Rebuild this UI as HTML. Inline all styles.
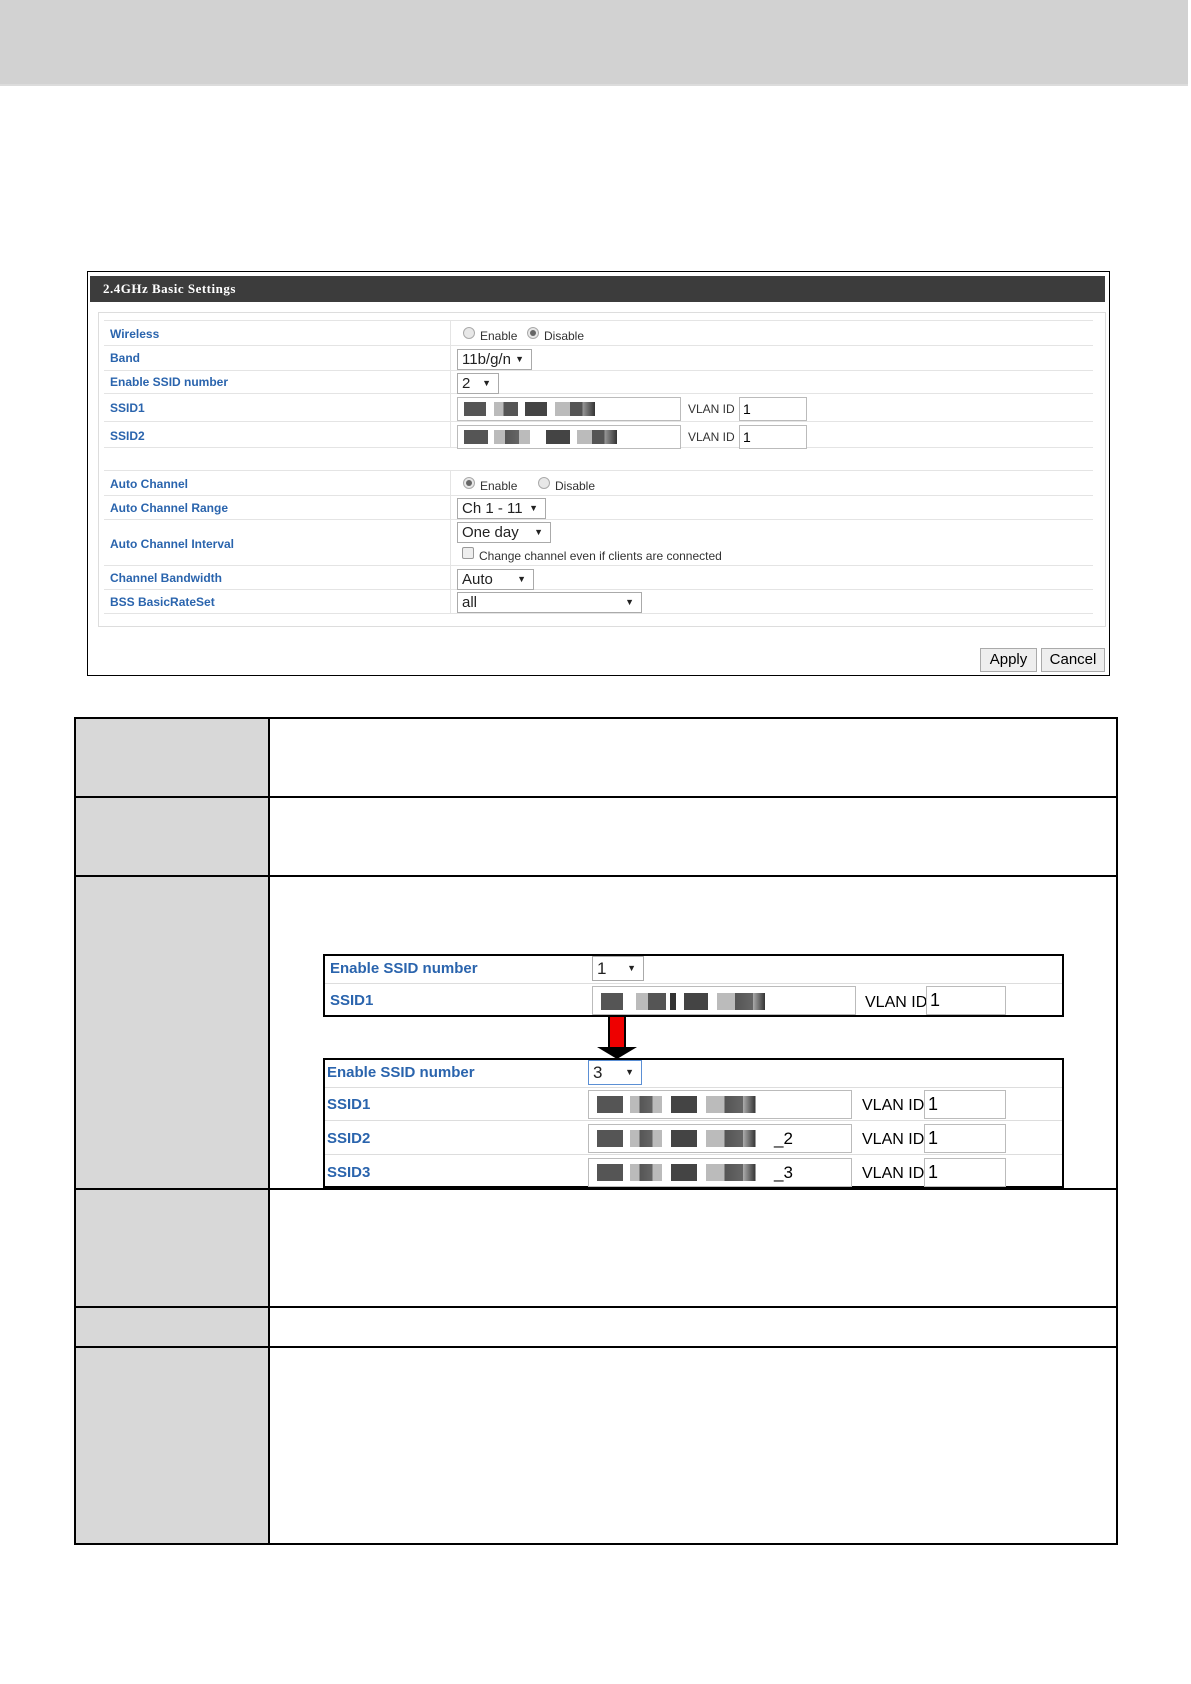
<!DOCTYPE html>
<html><head><meta charset="utf-8"><style>
*{margin:0;padding:0;box-sizing:border-box}
body{width:1191px;height:1684px;position:relative;background:#fff;font-family:"Liberation Sans",Arial,sans-serif;overflow:hidden}
.a{position:absolute}
.lbl{position:absolute;color:#2a64ad;font-weight:bold;font-size:12px}
.row{position:absolute;left:104px;width:989px;border-bottom:1px solid #e4e4e4;border-top:1px solid #e4e4e4}
.sel{position:absolute;border:1px solid #aaa;background:#fff;font-size:15px;color:#222;padding-left:4px;line-height:19px;height:21px}
.sel::after{content:"▼";position:absolute;right:7px;top:0;font-size:9px}
.inp{position:absolute;border:1px solid #bbb;background:#fff;font-size:14px;line-height:22px;padding-left:3px;height:24px}
.t{position:absolute;font-size:12px;color:#333}
.rad{position:absolute;width:12px;height:12px;border-radius:50%;border:1px solid #aaa;background:#e8e8e8}
.rad.on::after{content:"";position:absolute;left:2px;top:2px;width:6px;height:6px;border-radius:50%;background:#666}
.px{position:absolute;height:14px}
.btn{position:absolute;border:1px solid #aaa;background:#eee;font-size:15px;text-align:center;line-height:22px;height:24px}
.cell{position:absolute;background:#d8d8d8}
.hl{position:absolute;background:#000;height:2px}
.vl{position:absolute;background:#000;width:2px}
.bl{position:absolute;color:#2a64ad;font-weight:bold;font-size:15px}
</style></head><body>
<div class="a" style="left:0;top:0;width:1188px;height:86px;background:#d2d2d2;border-bottom:2px solid #dcdcdc"></div>

<!-- settings frame -->
<div class="a" style="left:87px;top:271px;width:1023px;height:405px;border:1px solid #000"></div>
<div class="a" style="left:90px;top:276px;width:1015px;height:26px;background:#3c3c3c"></div>
<div class="a" style="left:103px;top:281px;color:#fff;font-family:'Liberation Serif',serif;font-weight:bold;font-size:13px;letter-spacing:.5px">2.4GHz Basic Settings</div>
<div class="a" style="left:98px;top:312px;width:1008px;height:315px;border:1px solid #ddd"></div>
<div class="a" style="left:450px;top:320px;width:1px;height:128px;background:#e4e4e4"></div>
<div class="a" style="left:450px;top:470px;width:1px;height:144px;background:#e4e4e4"></div>

<div class="row" style="top:320px;height:26px"></div>
<div class="row" style="top:370px;height:24px"></div>
<div class="row" style="top:421px;height:27px"></div>
<div class="row" style="top:470px;height:26px"></div>
<div class="row" style="top:519px;height:47px"></div>
<div class="row" style="top:589px;height:25px"></div>

<div class="lbl" style="left:110px;top:327px">Wireless</div>
<div class="lbl" style="left:110px;top:351px">Band</div>
<div class="lbl" style="left:110px;top:375px">Enable SSID number</div>
<div class="lbl" style="left:110px;top:401px">SSID1</div>
<div class="lbl" style="left:110px;top:429px">SSID2</div>
<div class="lbl" style="left:110px;top:477px">Auto Channel</div>
<div class="lbl" style="left:110px;top:501px">Auto Channel Range</div>
<div class="lbl" style="left:110px;top:537px">Auto Channel Interval</div>
<div class="lbl" style="left:110px;top:571px">Channel Bandwidth</div>
<div class="lbl" style="left:110px;top:595px">BSS BasicRateSet</div>

<div class="rad" style="left:463px;top:327px"></div><div class="t" style="left:480px;top:329px">Enable</div>
<div class="rad on" style="left:527px;top:327px"></div><div class="t" style="left:544px;top:329px">Disable</div>
<div class="sel" style="left:457px;top:349px;width:75px">11b/g/n</div>
<div class="sel" style="left:457px;top:373px;width:42px">2</div>
<div class="inp" style="left:457px;top:397px;width:224px"></div>
<div class="px" style="left:464px;top:402px;width:22px;background:#555"></div><div class="px" style="left:494px;top:402px;width:24px;background:linear-gradient(90deg,#bbb 40%,#555 40%)"></div><div class="px" style="left:525px;top:402px;width:22px;background:#444"></div><div class="px" style="left:555px;top:402px;width:50px;background:linear-gradient(90deg,#bbb 30%,#555 30%,#555 55%,#999 55%,#333 80%,#fff 80%)"></div>
<div class="t" style="left:688px;top:402px">VLAN ID</div>
<div class="inp" style="left:739px;top:397px;width:68px">1</div>
<div class="inp" style="left:457px;top:425px;width:224px"></div>
<div class="px" style="left:464px;top:430px;width:24px;background:#555"></div><div class="px" style="left:494px;top:430px;width:36px;background:linear-gradient(90deg,#bbb 30%,#555 30%,#666 70%,#bbb 70%)"></div><div class="px" style="left:546px;top:430px;width:24px;background:#444"></div><div class="px" style="left:577px;top:430px;width:50px;background:linear-gradient(90deg,#bbb 30%,#555 30%,#555 55%,#999 55%,#333 80%,#fff 80%)"></div>
<div class="t" style="left:688px;top:430px">VLAN ID</div>
<div class="inp" style="left:739px;top:425px;width:68px">1</div>

<div class="rad on" style="left:463px;top:477px"></div><div class="t" style="left:480px;top:479px">Enable</div>
<div class="rad" style="left:538px;top:477px"></div><div class="t" style="left:555px;top:479px">Disable</div>
<div class="sel" style="left:457px;top:498px;width:89px">Ch 1 - 11</div>
<div class="sel" style="left:457px;top:522px;width:94px">One day</div>
<div class="a" style="left:462px;top:547px;width:12px;height:12px;border:1px solid #999;border-radius:2px;background:#eee"></div>
<div class="t" style="left:479px;top:549px">Change channel even if clients are connected</div>
<div class="sel" style="left:457px;top:569px;width:77px">Auto</div>
<div class="sel" style="left:457px;top:592px;width:185px">all</div>
<div class="btn" style="left:980px;top:648px;width:57px">Apply</div>
<div class="btn" style="left:1041px;top:648px;width:64px">Cancel</div>

<!-- lower table -->
<div class="cell" style="left:74px;top:717px;width:195px;height:827px"></div>
<div class="a" style="left:74px;top:717px;width:1044px;height:828px;border:2px solid #000"></div>
<div class="vl" style="left:268px;top:717px;height:828px"></div>
<div class="hl" style="left:74px;top:796px;width:1044px"></div>
<div class="hl" style="left:74px;top:875px;width:1044px"></div>
<div class="hl" style="left:74px;top:1188px;width:1044px"></div>
<div class="hl" style="left:74px;top:1306px;width:1044px"></div>
<div class="hl" style="left:74px;top:1346px;width:1044px"></div>

<!-- inset 1 -->
<div class="a" style="left:323px;top:954px;width:741px;height:63px;border:2px solid #000"></div>
<div class="a" style="left:325px;top:983px;width:737px;height:1px;background:#ddd"></div>
<div class="bl" style="left:330px;top:960px">Enable SSID number</div>
<div class="bl" style="left:330px;top:992px">SSID1</div>
<div class="sel" style="left:592px;top:956px;width:52px;height:25px;font-size:17px;line-height:23px">1</div>
<div class="inp" style="left:592px;top:986px;width:264px;height:29px"></div>
<div class="px" style="left:601px;top:993px;width:22px;height:17px;background:#555"></div><div class="px" style="left:636px;top:993px;width:40px;height:17px;background:linear-gradient(90deg,#bbb 30%,#555 30%,#555 75%,#fff 75%,#fff 85%,#333 85%)"></div><div class="px" style="left:684px;top:993px;width:24px;height:17px;background:#444"></div><div class="px" style="left:717px;top:993px;width:60px;height:17px;background:linear-gradient(90deg,#bbb 30%,#555 30%,#666 60%,#aaa 60%,#333 80%,#fff 80%)"></div>
<div class="a" style="left:865px;top:994px;font-size:16px">VLAN ID</div>
<div class="inp" style="left:926px;top:986px;width:80px;height:29px;font-size:18px;line-height:27px">1</div>

<!-- arrow -->
<div class="a" style="left:608px;top:1017px;width:18px;height:32px;background:#e00;border:2px solid #000;border-top:none"></div>
<div class="a" style="left:597px;top:1047px;width:0;height:0;border-left:20px solid transparent;border-right:20px solid transparent;border-top:12px solid #000"></div>

<!-- inset 2 -->
<div class="a" style="left:323px;top:1058px;width:741px;height:130px;border:2px solid #000"></div>
<div class="a" style="left:325px;top:1087px;width:737px;height:1px;background:#ddd"></div>
<div class="a" style="left:325px;top:1120px;width:737px;height:1px;background:#ddd"></div>
<div class="a" style="left:325px;top:1154px;width:737px;height:1px;background:#ddd"></div>
<div class="bl" style="left:327px;top:1064px">Enable SSID number</div>
<div class="bl" style="left:327px;top:1096px">SSID1</div>
<div class="bl" style="left:327px;top:1130px">SSID2</div>
<div class="bl" style="left:327px;top:1164px">SSID3</div>
<div class="sel" style="left:588px;top:1060px;width:54px;height:25px;font-size:17px;line-height:23px;border-color:#5b8fd4">3</div>
<div class="inp" style="left:588px;top:1090px;width:264px;height:29px"></div>
<div class="inp" style="left:588px;top:1124px;width:264px;height:29px;font-size:17px;line-height:27px;padding-left:185px">_2</div>
<div class="inp" style="left:588px;top:1158px;width:264px;height:29px;font-size:17px;line-height:27px;padding-left:185px">_3</div>
<div class="px" style="left:597px;top:1096px;width:26px;height:17px;background:#555"></div><div class="px" style="left:630px;top:1096px;width:32px;height:17px;background:linear-gradient(90deg,#bbb 30%,#555 30%,#666 70%,#bbb 70%)"></div><div class="px" style="left:671px;top:1096px;width:26px;height:17px;background:#444"></div><div class="px" style="left:706px;top:1096px;width:62px;height:17px;background:linear-gradient(90deg,#bbb 30%,#555 30%,#666 60%,#aaa 60%,#333 80%,#fff 80%)"></div>
<div class="px" style="left:597px;top:1130px;width:26px;height:17px;background:#555"></div><div class="px" style="left:630px;top:1130px;width:32px;height:17px;background:linear-gradient(90deg,#bbb 30%,#555 30%,#666 70%,#bbb 70%)"></div><div class="px" style="left:671px;top:1130px;width:26px;height:17px;background:#444"></div><div class="px" style="left:706px;top:1130px;width:62px;height:17px;background:linear-gradient(90deg,#bbb 30%,#555 30%,#666 60%,#aaa 60%,#333 80%,#fff 80%)"></div>
<div class="px" style="left:597px;top:1164px;width:26px;height:17px;background:#555"></div><div class="px" style="left:630px;top:1164px;width:32px;height:17px;background:linear-gradient(90deg,#bbb 30%,#555 30%,#666 70%,#bbb 70%)"></div><div class="px" style="left:671px;top:1164px;width:26px;height:17px;background:#444"></div><div class="px" style="left:706px;top:1164px;width:62px;height:17px;background:linear-gradient(90deg,#bbb 30%,#555 30%,#666 60%,#aaa 60%,#333 80%,#fff 80%)"></div>
<div class="a" style="left:862px;top:1097px;font-size:16px">VLAN ID</div>
<div class="a" style="left:862px;top:1131px;font-size:16px">VLAN ID</div>
<div class="a" style="left:862px;top:1165px;font-size:16px">VLAN ID</div>
<div class="inp" style="left:924px;top:1090px;width:82px;height:29px;font-size:18px;line-height:27px">1</div>
<div class="inp" style="left:924px;top:1124px;width:82px;height:29px;font-size:18px;line-height:27px">1</div>
<div class="inp" style="left:924px;top:1158px;width:82px;height:29px;font-size:18px;line-height:27px">1</div>
</body></html>
